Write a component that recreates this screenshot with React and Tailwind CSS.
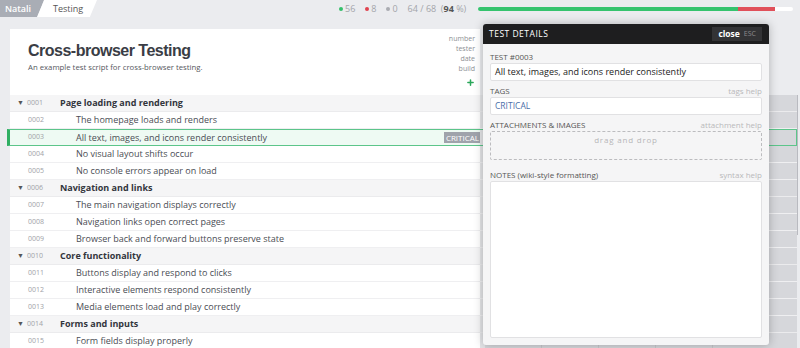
import { Plus } from "lucide-react";

const rows = [
  { n: "0001", t: "Page loading and rendering", s: true },
  { n: "0002", t: "The homepage loads and renders" },
  { n: "0003", t: "All text, images, and icons render consistently", sel: true, tag: "CRITICAL" },
  { n: "0004", t: "No visual layout shifts occur" },
  { n: "0005", t: "No console errors appear on load" },
  { n: "0006", t: "Navigation and links", s: true },
  { n: "0007", t: "The main navigation displays correctly" },
  { n: "0008", t: "Navigation links open correct pages" },
  { n: "0009", t: "Browser back and forward buttons preserve state" },
  { n: "0010", t: "Core functionality", s: true },
  { n: "0011", t: "Buttons display and respond to clicks" },
  { n: "0012", t: "Interactive elements respond consistently" },
  { n: "0013", t: "Media elements load and play correctly" },
  { n: "0014", t: "Forms and inputs", s: true },
  { n: "0015", t: "Form fields display properly" },
];

function Row({ row }) {
  const base = row.sel
    ? "border border-[#5cc58a] bg-[#eefaf3] ml-[-3px] border-l-[3px] border-l-[#2fae62]"
    : row.s
    ? "bg-[#f5f5f6] border-b border-[#ebebed]"
    : "bg-white border-b border-[#efeff1]";
  return (
    <div className={`flex h-[17px] items-center ${base}`}>
      <div className="flex w-[470px] items-center">
        <div className="w-[17px] pl-[7px] text-[7px] text-[#555]">{row.s ? "▼" : ""}</div>
        <div className={`w-[33px] text-[7px] text-[#a0a2a7] ${row.s ? "" : "pl-[1px]"}`}>
          {row.n}
        </div>
        <div
          className={`flex-1 truncate text-[9px] ${
            row.s ? "font-bold text-[#33363d]" : "pl-[16px] text-[#4a4d54]"
          }`}
        >
          {row.t}
        </div>
        {row.tag && (
          <div className="mr-[-1px] bg-[#9fa3ab] px-[2px] text-[8px] leading-[11px] text-white">
            {row.tag}
          </div>
        )}
      </div>
      <div className="h-full w-[5px] bg-[#e4e5e8]" />
      <div className="flex h-full flex-1">
        <div className="w-[57px] border-r border-[#c7c8cc] bg-[#d6d7db]" />
        <div className="w-[57px] border-r border-[#c7c8cc] bg-[#d6d7db]" />
        <div className="w-[57px] border-r border-[#c7c8cc] bg-[#d6d7db]" />
        <div className="w-[57px] border-r border-[#c7c8cc] bg-[#d6d7db]" />
        <div className="flex-1 bg-[#d6d7db]" />
      </div>
    </div>
  );
}

function Field({ label, help, first, children }) {
  return (
    <div className={first ? "mt-[7px]" : "mt-[4px]"}>
      <div className="flex justify-between text-[8px] leading-[11px]">
        <span className="text-[#555]">{label}</span>
        <span className="text-[#b9b9bb]">{help}</span>
      </div>
      {children}
    </div>
  );
}

export default function App() {
  return (
    <div className="relative h-[348px] w-[800px] overflow-hidden bg-[#ebecef] font-['Open_Sans',sans-serif]">
      {/* top bar */}
      <div className="flex h-[17px] items-center">
        <div className="flex h-full">
          <div className="flex h-full w-[44px] items-center bg-[#a9adb5] pl-[5px] text-[9px] font-semibold text-white [clip-path:polygon(0_0,100%_0,85%_100%,0_100%)]">
            Natali
          </div>
          <div className="ml-[-7px] flex h-full w-[60px] items-center bg-white pl-[16px] text-[9px] text-[#555] [clip-path:polygon(12%_0,100%_0,88%_100%,0_100%)]">
            Testing
          </div>
        </div>
        <div className="ml-[242px] flex items-center gap-[10px] text-[9px] text-[#a3a5aa]">
          <span className="flex items-center gap-[2px]">
            <span className="h-[4px] w-[4px] rounded-full bg-[#34c06b]" />
            56
          </span>
          <span className="flex items-center gap-[2px]">
            <span className="h-[4px] w-[4px] rounded-full bg-[#e0434f]" />
            8
          </span>
          <span className="flex items-center gap-[2px]">
            <span className="h-[4px] w-[4px] rounded-full bg-[#aaacb1]" />
            0
          </span>
          <span>
            64 / 68 &nbsp;(<b className="text-[#555]">94</b> %)
          </span>
        </div>
        <div className="ml-[12px] flex h-[4px] w-[315px] overflow-hidden rounded-full bg-white">
          <div className="w-[260px] bg-[#35c36e]" />
          <div className="w-[37px] bg-[#e0505a]" />
        </div>
      </div>

      {/* main card */}
      <div className="ml-[10px] mt-[12px]">
        <div className="flex h-[66px] w-[470px] justify-between bg-white">
          <div className="pl-[18px] pt-[12px]">
            <div className="font-['Liberation_Sans',sans-serif] text-[16px] font-bold leading-[20px] tracking-[-0.5px] text-[#3a3d45]">
              Cross-browser Testing
            </div>
            <div className="mt-[1px] text-[7.75px] text-[#55585e]">
              An example test script for cross-browser testing.
            </div>
          </div>
          <div className="flex flex-col items-end pr-[5px] pt-[5px] text-[7px] leading-[10px] text-[#8d8f94]">
            <span>number</span>
            <span>tester</span>
            <span>date</span>
            <span>build</span>
            <Plus className="mt-[4px] h-[9px] w-[9px] text-[#2aa65a]" strokeWidth={4} />
          </div>
        </div>
        <div className="w-[787px]">
          {rows.map((r) => (
            <Row key={r.n} row={r} />
          ))}
        </div>
      </div>

      {/* scrollbar */}
      <div className="absolute right-[2px] top-[95px] h-[140px] w-[1px] bg-[#b9bac0]" />

      {/* details panel */}
      <div className="absolute left-[483px] top-[24px] flex h-[321px] w-[286px] flex-col overflow-hidden rounded-[3px] bg-[#f5f5f6] shadow-[0_0_10px_rgba(0,0,0,0.25)]">
        <div className="flex h-[20px] items-center justify-between bg-[#1e1e1f] pl-[6px] pr-[7px]">
          <span className="text-[8.5px] tracking-[0.5px] text-white">TEST DETAILS</span>
          <div className="flex h-[14px] items-center gap-[4px] bg-[#333335] px-[6px]">
            <span className="text-[8.5px] font-bold text-white">close</span>
            <span className="text-[7px] text-[#8b8b8e]">ESC</span>
          </div>
        </div>
        <div className="flex flex-1 flex-col px-[7px] pb-[7px]">
          <Field label="TEST #0003" first>
            <div className="mt-[1px] flex h-[18px] items-center rounded-[2px] border border-[#e1e1e3] bg-white px-[4px] text-[9px] text-[#222]">
              All text, images, and icons render consistently
            </div>
          </Field>
          <Field label="TAGS" help="tags help">
            <div className="mt-[1px] flex h-[18px] items-center rounded-[2px] border border-[#e1e1e3] bg-white px-[4px] text-[8.5px] text-[#4a6ea8]">
              CRITICAL
            </div>
          </Field>
          <Field label="ATTACHMENTS & IMAGES" help="attachment help">
            <div className="mt-[1px] flex h-[29px] justify-center rounded-[2px] border border-dashed border-[#bcbcbf] pt-[2px] text-[8px] tracking-[0.8px] text-[#b5b5b8]">
              drag and drop
            </div>
          </Field>
          <div className="mt-[9px] flex flex-1 flex-col">
            <div className="flex justify-between text-[8px] leading-[11px]">
              <span className="text-[#555]">NOTES (wiki-style formatting)</span>
              <span className="text-[#b9b9bb]">syntax help</span>
            </div>
            <div className="mt-[1px] flex-1 rounded-[2px] border border-[#e1e1e3] bg-white" />
          </div>
        </div>
      </div>
    </div>
  );
}
